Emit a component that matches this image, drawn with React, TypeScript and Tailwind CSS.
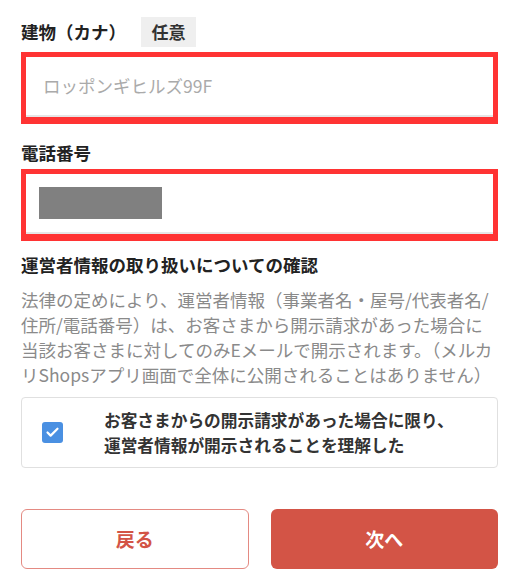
import { Check } from 'lucide-react'

const font = { fontFamily: '"Noto Sans CJK JP", "Noto Sans", sans-serif' }

function Field({ children }: { children: React.ReactNode }) {
  return (
    <div className="border-[5px] border-[#ff3333] border-b-[7px]">
      <div className="h-[60px] bg-white border-b-2 border-[#e6e6e6] flex items-center">
        {children}
      </div>
    </div>
  )
}

export default function App() {
  return (
    <div className="w-[519px] h-[579px] bg-white px-[21px] pt-[17px] text-[17.5px] text-[#222]" style={font}>
      {/* 建物（カナ） */}
      <div className="flex items-center h-[30px] gap-[15px]">
        <span className="font-bold">建物（カナ）</span>
        <span className="h-[30px] w-[55px] bg-[#efefef] flex items-center justify-center text-[17px] font-bold text-[#333]">任意</span>
      </div>
      <div className="mt-[5px]">
        <Field>
          <span className="ml-[17px] text-[#aaaaaa] text-[17.5px]">ロッポンギヒルズ99F</span>
        </Field>
      </div>

      {/* 電話番号 */}
      <div className="mt-[14px] h-[30px] flex items-center font-bold">電話番号</div>
      <div className="mt-[1px]">
        <Field>
          <div className="ml-[13px] w-[123px] h-[32px] bg-[#808080]" />
        </Field>
      </div>

      {/* 確認 */}
      <div className="mt-[14px] h-[20px] flex items-center font-bold">運営者情報の取り扱いについての確認</div>
      <p className="mt-[12px] leading-[25px] text-[#8a8a8a] whitespace-nowrap">
        法律の定めにより、運営者情報（事業者名・屋号/代表者名/
        <br />
        住所/電話番号）は、お客さまから開示請求があった場合に
        <br />
        当該お客さまに対してのみEメールで開示されます。（メルカ
        <br />
        リShopsアプリ画面で全体に公開されることはありません）
      </p>

      <label className="mt-[10px] h-[71px] border border-[#e0e0e0] rounded-[4px] flex items-center">
        <span className="ml-[20px] w-[21px] h-[21px] rounded-[3px] bg-[#4a90e2] flex items-center justify-center shrink-0">
          <Check size={15} strokeWidth={3.5} color="white" />
        </span>
        <span className="ml-[41px] font-bold text-[16.7px] leading-[25px] text-[#333]">
          お客さまからの開示請求があった場合に限り、
          <br />
          運営者情報が開示されることを理解した
        </span>
      </label>

      <div className="mt-[41px] grid grid-cols-2 gap-[22px]">
        <button className="h-[60px] rounded-[6px] border border-[#e48a82] bg-white text-[#d35446] text-[19px] font-bold" style={font}>
          戻る
        </button>
        <button className="h-[60px] rounded-[6px] bg-[#d35446] text-white text-[19px] font-bold" style={font}>
          次へ
        </button>
      </div>
    </div>
  )
}
